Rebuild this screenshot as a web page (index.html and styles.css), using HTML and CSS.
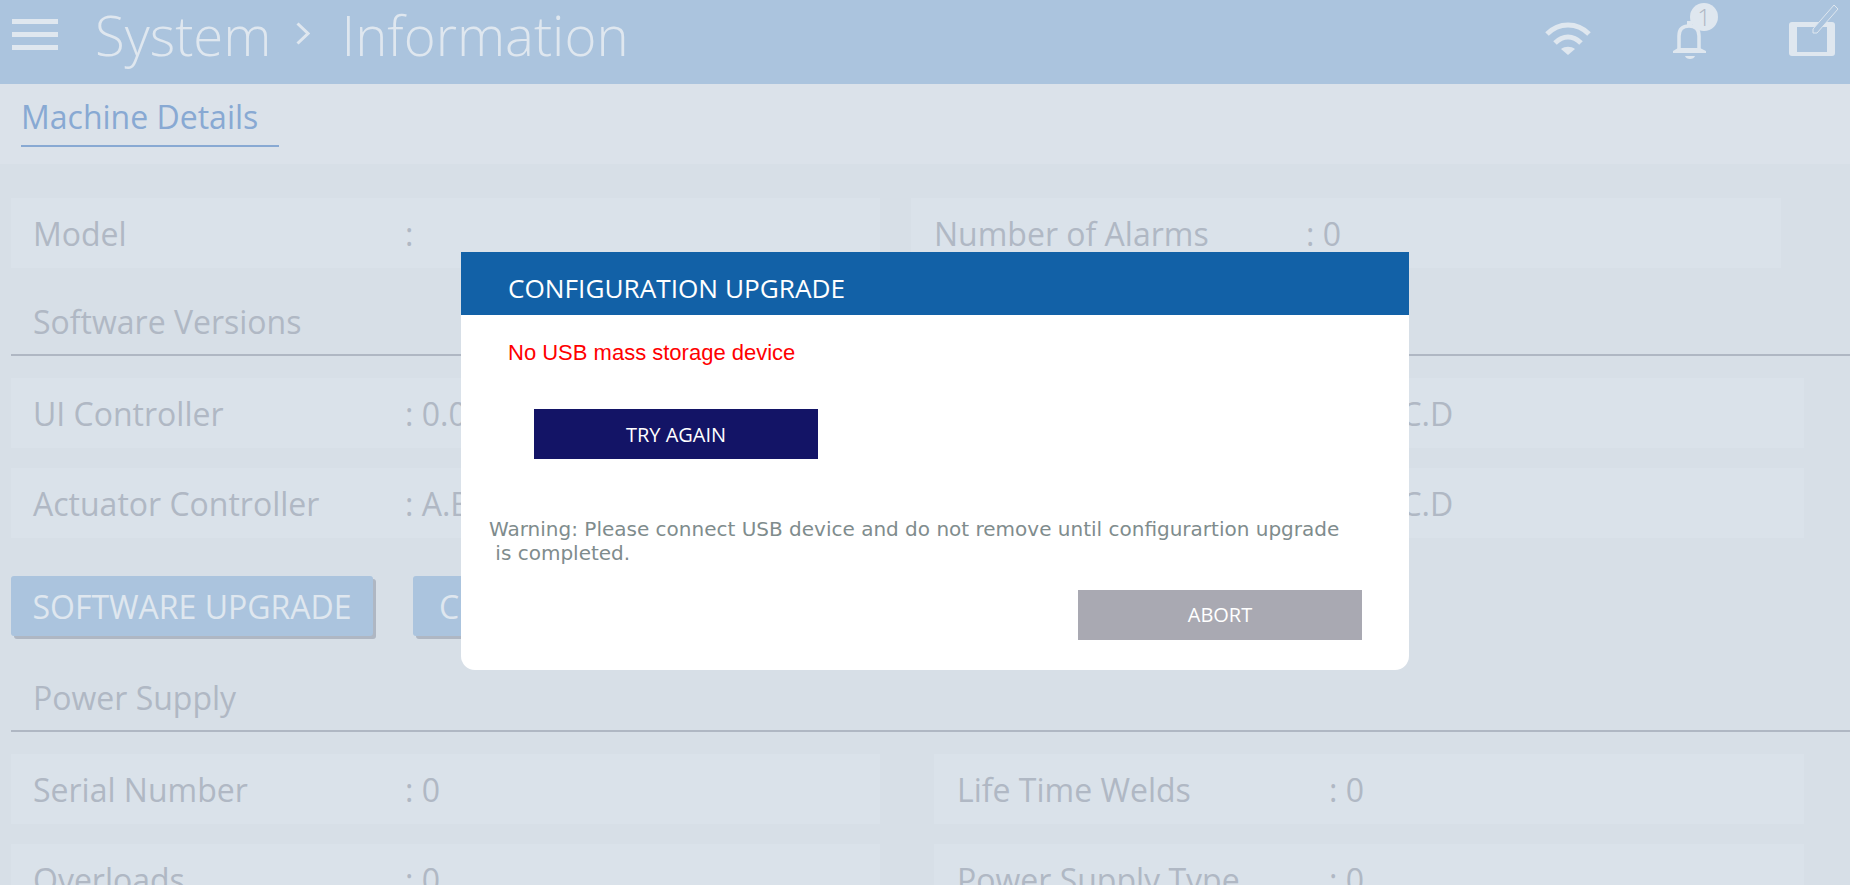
FILE: index.html
```html
<!DOCTYPE html>
<html>
<head>
    <title>System Information</title>
    <meta name="viewport" content="width=device-width, initial-scale=1"/>
    <link rel="stylesheet" href="styles.css">
</head>
<body>
<header class="topbar">
    <div class="hamburger"><span></span><span></span><span></span></div>
    <div class="crumb">System</div>
    <svg class="crumb-arrow" width="14" height="23" viewBox="0 0 14 23">
        <path d="M1.5 1.5 L12 11.5 L1.5 21.5" fill="none" stroke="#dfe7ef" stroke-width="3"/>
    </svg>
    <div class="crumb">Information</div>

    <svg class="icon-wifi" width="46" height="84" viewBox="0 0 46 84">
        <path d="M2 34 C14 22 32 22 44 34" fill="none" stroke="#dfe7ef" stroke-width="5"/>
        <path d="M10 43 C18 35 28 35 36 43" fill="none" stroke="#dfe7ef" stroke-width="5"/>
        <path d="M23 55 L16 49 C20 46 26 46 30 49 Z" fill="#dfe7ef"/>
    </svg>
    <div class="bell-wrap">
        <svg width="34" height="84" viewBox="0 0 34 84">
            <path d="M6 51 V36 C6 29 10 26 16 26 C22 26 26 29 26 36 V51" fill="none" stroke="#dfe7ef" stroke-width="3.5"/>
            <path d="M14 26 V21 H19 V26 Z" fill="#dfe7ef"/>
            <path d="M0 51 L5 48 H27 L33 51 V53 H0 Z" fill="#dfe7ef"/>
            <path d="M12 56 H22 C21 60 13 60 12 56 Z" fill="#dfe7ef"/>
        </svg>
        <span class="badge">1</span>
    </div>
    <svg class="icon-tablet" width="54" height="84" viewBox="0 0 54 84">
        <path d="M5 22 H45 Q48 22 48 25 V53 Q48 56 45 56 H5 Q2 56 2 53 V25 Q2 22 5 22 Z M10 27 V52 H40 V27 Z" fill="#dfe7ef" fill-rule="evenodd"/>
        <path d="M26 29 L47 5 L51 9 L30 33 H26 Z" fill="#abc4de" stroke="#dfe7ef" stroke-width="1"/>
    </svg>
</header>

<nav class="tabs">
    <div class="tab">Machine Details</div>
</nav>

<main class="content">
    <div class="row row-first">
        <div class="cell"><span class="label">Model</span><span>:</span></div>
        <div class="cell"><span class="label">Number of Alarms</span><span>: 0</span></div>
    </div>

    <h3 class="section">Software Versions</h3>
    <div class="row">
        <div class="cell"><span class="label">UI Controller</span><span>: 0.0.0.0</span></div>
        <div class="cell"><span class="label label-short"></span><span>: A.B.C.D</span></div>
    </div>
    <div class="row row-gap">
        <div class="cell"><span class="label">Actuator Controller</span><span>: A.B.C.D</span></div>
        <div class="cell"><span class="label label-short"></span><span>: A.B.C.D</span></div>
    </div>

    <div class="actions">
        <button class="action-btn">SOFTWARE UPGRADE</button>
        <button class="action-btn">CONFIGURATION UPGRADE</button>
    </div>

    <h3 class="section">Power Supply</h3>
    <div class="row">
        <div class="cell"><span class="label">Serial Number</span><span>: 0</span></div>
        <div class="cell"><span class="label">Life Time Welds</span><span>: 0</span></div>
    </div>
    <div class="row row-gap">
        <div class="cell"><span class="label">Overloads</span><span>: 0</span></div>
        <div class="cell"><span class="label">Power Supply Type</span><span>: 0</span></div>
    </div>
</main>

<div class="modal">
    <div class="modal-title">CONFIGURATION UPGRADE</div>
    <div class="modal-error">No USB mass storage device</div>
    <button class="modal-btn try-btn">TRY AGAIN</button>
    <p class="modal-warning">Warning: Please connect USB device and do not remove until configurartion upgrade<br>&nbsp;is completed.</p>
    <div class="modal-foot">
        <button class="modal-btn abort-btn">ABORT</button>
    </div>
</div>
</body>
</html>
```

FILE: styles.css
```css
html, body {
    margin: 0;
    height: 885px;
    overflow: hidden;
}

body {
    background-color: #d7dfe7;
    font-family: "Open Sans", sans-serif;
    color: #b0b8c4;
}

.topbar {
    height: 84px;
    background-color: #abc4de;
    display: flex;
    align-items: flex-start;
    color: #dfe7ef;
    padding-right: 9px;
}

.hamburger {
    width: 46px;
    margin: 19px 37px 0 12px;
    display: flex;
    flex-direction: column;
    gap: 8px;
}

.hamburger span {
    height: 5px;
    background-color: #dfe7ef;
}

.crumb {
    font-size: 54.5px;
    font-weight: 300;
    line-height: 70px;
}

.crumb-arrow {
    margin: 22px 31px 0 25px;
}

.icon-wifi {
    margin-left: auto;
    margin-right: 82px;
}

.bell-wrap {
    position: relative;
    width: 34px;
    height: 84px;
}

.bell-wrap svg {
    display: block;
}

.badge {
    position: absolute;
    left: 17px;
    top: 3px;
    width: 28px;
    height: 28px;
    border-radius: 50%;
    background-color: #dfe7ef;
    color: #b0b8c4;
    font-size: 24px;
    font-weight: 300;
    line-height: 28px;
    text-align: center;
}

.icon-tablet {
    margin-left: 80px;
}

.tabs {
    height: 80px;
    background-color: #dbe2ea;
    box-sizing: border-box;
    padding: 16px 0 0 21px;
}

.tab {
    width: 258px;
    height: 45px;
    border-bottom: 2px solid #88a9d3;
    color: #88a9d3;
    font-size: 32px;
    line-height: 34px;
}

.content {
    padding: 34px 0 0 11px;
}

.row {
    display: grid;
    grid-template-columns: 869px 870px;
    column-gap: 54px;
}

.row-first {
    column-gap: 31px;
}

.row-gap {
    margin-top: 20px;
}

.cell {
    height: 70px;
    background-color: #dae2ea;
    padding-left: 22px;
    display: flex;
    align-items: center;
    font-size: 32px;
}

.cell + .cell {
    padding-left: 23px;
}

.label {
    width: 372px;
    flex: none;
}

.label-short {
    width: 370px;
}

.section {
    margin: 0 0 22px 0;
    height: 88px;
    box-sizing: border-box;
    padding: 34px 0 0 22px;
    border-bottom: 2px solid #afb7c3;
    font-size: 32px;
    font-weight: 400;
    line-height: 40px;
}

.actions {
    display: flex;
    gap: 40px;
    margin: 38px 0 8px 0;
}

.action-btn {
    height: 60px;
    width: 362px;
    flex: none;
    border: none;
    border-radius: 3px;
    background-color: #abc4de;
    box-shadow: 3px 3px 0 #afb7c3;
    color: #dfe7ef;
    font-family: "Open Sans", sans-serif;
    font-size: 32px;
    text-align: center;
    white-space: nowrap;
    padding: 0;
}

.action-btn + .action-btn {
    width: 464px;
}

/* modal sits over the dimmed page */
.modal {
    position: absolute;
    left: 461px;
    top: 252px;
    width: 948px;
    height: 418px;
    background-color: #ffffff;
    border-radius: 0 0 14px 14px;
}

.modal-title {
    height: 63px;
    box-sizing: border-box;
    background-color: #1261a7;
    color: #ffffff;
    font-size: 26.2px;
    line-height: 63px;
    padding: 5px 0 0 47px;
}

.modal-error {
    margin: 26px 0 0 47px;
    font-family: "Liberation Sans", Arial, sans-serif;
    font-size: 22px;
    line-height: 24px;
    color: #ff0000;
}

.modal-btn {
    display: block;
    width: 284px;
    height: 50px;
    border: none;
    color: #ffffff;
    font-family: "Open Sans", sans-serif;
    font-size: 20px;
    padding: 0;
}

.try-btn {
    margin: 44px 0 0 73px;
    background-color: #131466;
}

.modal-warning {
    margin: 58px 0 0 28px;
    font-family: "DejaVu Sans", sans-serif;
    font-size: 20px;
    line-height: 24px;
    color: #7f8c8d;
}

.modal-foot {
    display: flex;
    justify-content: flex-end;
    padding-right: 47px;
    margin-top: 25px;
}

.abort-btn {
    background-color: #a9a9b2;
    padding-bottom: 2px;
}
```
